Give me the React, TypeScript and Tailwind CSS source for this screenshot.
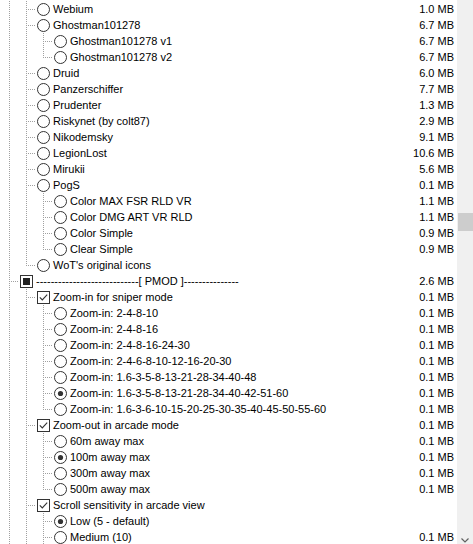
import React from 'react'

type Kind = 'radio' | 'check' | 'mixed'

interface Row {
  d: number
  label: string
  size?: string
  kind: Kind
  on?: boolean
  last?: boolean
  parent?: boolean
}

const rows: Row[] = [
  { d: 1, label: 'Webium', size: '1.0 MB', kind: 'radio' },
  { d: 1, label: 'Ghostman101278', size: '6.7 MB', kind: 'radio', parent: true },
  { d: 2, label: 'Ghostman101278 v1', size: '6.7 MB', kind: 'radio' },
  { d: 2, label: 'Ghostman101278 v2', size: '6.7 MB', kind: 'radio', last: true },
  { d: 1, label: 'Druid', size: '6.0 MB', kind: 'radio' },
  { d: 1, label: 'Panzerschiffer', size: '7.7 MB', kind: 'radio' },
  { d: 1, label: 'Prudenter', size: '1.3 MB', kind: 'radio' },
  { d: 1, label: 'Riskynet (by colt87)', size: '2.9 MB', kind: 'radio' },
  { d: 1, label: 'Nikodemsky', size: '9.1 MB', kind: 'radio' },
  { d: 1, label: 'LegionLost', size: '10.6 MB', kind: 'radio' },
  { d: 1, label: 'Mirukii', size: '5.6 MB', kind: 'radio' },
  { d: 1, label: 'PogS', size: '0.1 MB', kind: 'radio', parent: true },
  { d: 2, label: 'Color MAX FSR RLD VR', size: '1.1 MB', kind: 'radio' },
  { d: 2, label: 'Color DMG ART VR RLD', size: '1.1 MB', kind: 'radio' },
  { d: 2, label: 'Color Simple', size: '0.9 MB', kind: 'radio' },
  { d: 2, label: 'Clear Simple', size: '0.9 MB', kind: 'radio', last: true },
  { d: 1, label: "WoT's original icons", kind: 'radio', last: true },
  {
    d: 0,
    label: '----------------------------[ PMOD ]---------------',
    size: '2.6 MB',
    kind: 'mixed',
    parent: true,
  },
  { d: 1, label: 'Zoom-in for sniper mode', size: '0.1 MB', kind: 'check', on: true, parent: true },
  { d: 2, label: 'Zoom-in: 2-4-8-10', size: '0.1 MB', kind: 'radio' },
  { d: 2, label: 'Zoom-in: 2-4-8-16', size: '0.1 MB', kind: 'radio' },
  { d: 2, label: 'Zoom-in: 2-4-8-16-24-30', size: '0.1 MB', kind: 'radio' },
  { d: 2, label: 'Zoom-in: 2-4-6-8-10-12-16-20-30', size: '0.1 MB', kind: 'radio' },
  { d: 2, label: 'Zoom-in: 1.6-3-5-8-13-21-28-34-40-48', size: '0.1 MB', kind: 'radio' },
  { d: 2, label: 'Zoom-in: 1.6-3-5-8-13-21-28-34-40-42-51-60', size: '0.1 MB', kind: 'radio', on: true },
  { d: 2, label: 'Zoom-in: 1.6-3-6-10-15-20-25-30-35-40-45-50-55-60', size: '0.1 MB', kind: 'radio', last: true },
  { d: 1, label: 'Zoom-out in arcade mode', size: '0.1 MB', kind: 'check', on: true, parent: true },
  { d: 2, label: '60m away max', size: '0.1 MB', kind: 'radio' },
  { d: 2, label: '100m away max', size: '0.1 MB', kind: 'radio', on: true },
  { d: 2, label: '300m away max', size: '0.1 MB', kind: 'radio' },
  { d: 2, label: '500m away max', size: '0.1 MB', kind: 'radio', last: true },
  { d: 1, label: 'Scroll sensitivity in arcade view', kind: 'check', on: true, parent: true },
  { d: 2, label: 'Low (5 - default)', kind: 'radio', on: true },
  { d: 2, label: 'Medium (10)', size: '0.1 MB', kind: 'radio' },
]

const LINE = '#a0a0a0'

// dotted tree lines to the left of the icon
function Gutter({ d, last }: { d: number; last?: boolean }) {
  const w = 20 + 17 * d
  const cols = Array.from({ length: d }, (_, i) => 9 + 17 * i)
  const own = 9 + 17 * d
  return (
    <svg width={w} height={16} className="shrink-0" shapeRendering="crispEdges">
      {cols.map((x) => (
        <line key={x} x1={x + 0.5} y1={0} x2={x + 0.5} y2={16} stroke={LINE} strokeDasharray="1 1" />
      ))}
      <line x1={own + 0.5} y1={0} x2={own + 0.5} y2={last ? 9 : 16} stroke={LINE} strokeDasharray="1 1" />
      <line x1={own + 2} y1={8.5} x2={w - 1} y2={8.5} stroke={LINE} strokeDasharray="1 1" />
    </svg>
  )
}

function Icon({ kind, on, parent }: { kind: Kind; on?: boolean; parent?: boolean }) {
  return (
    <svg width={13} height={16} className="shrink-0" viewBox="0 0 13 16">
      {kind === 'radio' && (
        <>
          <circle cx={6.5} cy={8.5} r={6} fill="#fff" stroke="#333" strokeWidth={1} />
          {on && <circle cx={6.5} cy={8.5} r={2.6} fill="#333" />}
        </>
      )}
      {kind !== 'radio' && (
        <rect x={0.5} y={2.5} width={12} height={12} fill="#fff" stroke="#333" shapeRendering="crispEdges" />
      )}
      {kind === 'mixed' && <rect x={3} y={5} width={7} height={7} fill="#222" shapeRendering="crispEdges" />}
      {kind === 'check' && on && (
        <path d="M2.8 8.3 L5.3 10.9 L10.2 5.6" fill="none" stroke="#333" strokeWidth={1.1} />
      )}
      {parent && (
        <line x1={6.5} y1={15.5} x2={6.5} y2={16} stroke={LINE} shapeRendering="crispEdges" />
      )}
    </svg>
  )
}

export default function App() {
  return (
    <div
      className="w-[473px] h-[544px] overflow-hidden bg-white flex text-[11px] leading-[16px] text-black"
      style={{ fontFamily: '"Liberation Sans", Arial, sans-serif' }}
    >
      {/* tree */}
      <div className="flex-1 pt-px min-w-0">
        {rows.map((r, i) => (
          <div key={i} className="flex items-start h-[16px] pr-[3px]">
            <Gutter d={r.d} last={r.last} />
            <Icon kind={r.kind} on={r.on} parent={r.parent} />
            <span className="ml-[3px] whitespace-nowrap">{r.label}</span>
            <span className="ml-auto whitespace-nowrap">{r.size}</span>
          </div>
        ))}
      </div>

      {/* scrollbar */}
      <div className="w-[16px] shrink-0 bg-[#f0f0f0] flex flex-col">
        <div className="h-[213px]" />
        <div className="h-[18px] ml-px bg-[#cdcdcd]" />
        <div className="flex-1" />
        <div className="h-[8px] flex justify-center pt-[2px]">
          <svg width={8} height={5} viewBox="0 0 8 5">
            <path d="M0.5 0.5 L4 4 L7.5 0.5" fill="none" stroke="#606060" strokeWidth={1.2} />
          </svg>
        </div>
      </div>
    </div>
  )
}
